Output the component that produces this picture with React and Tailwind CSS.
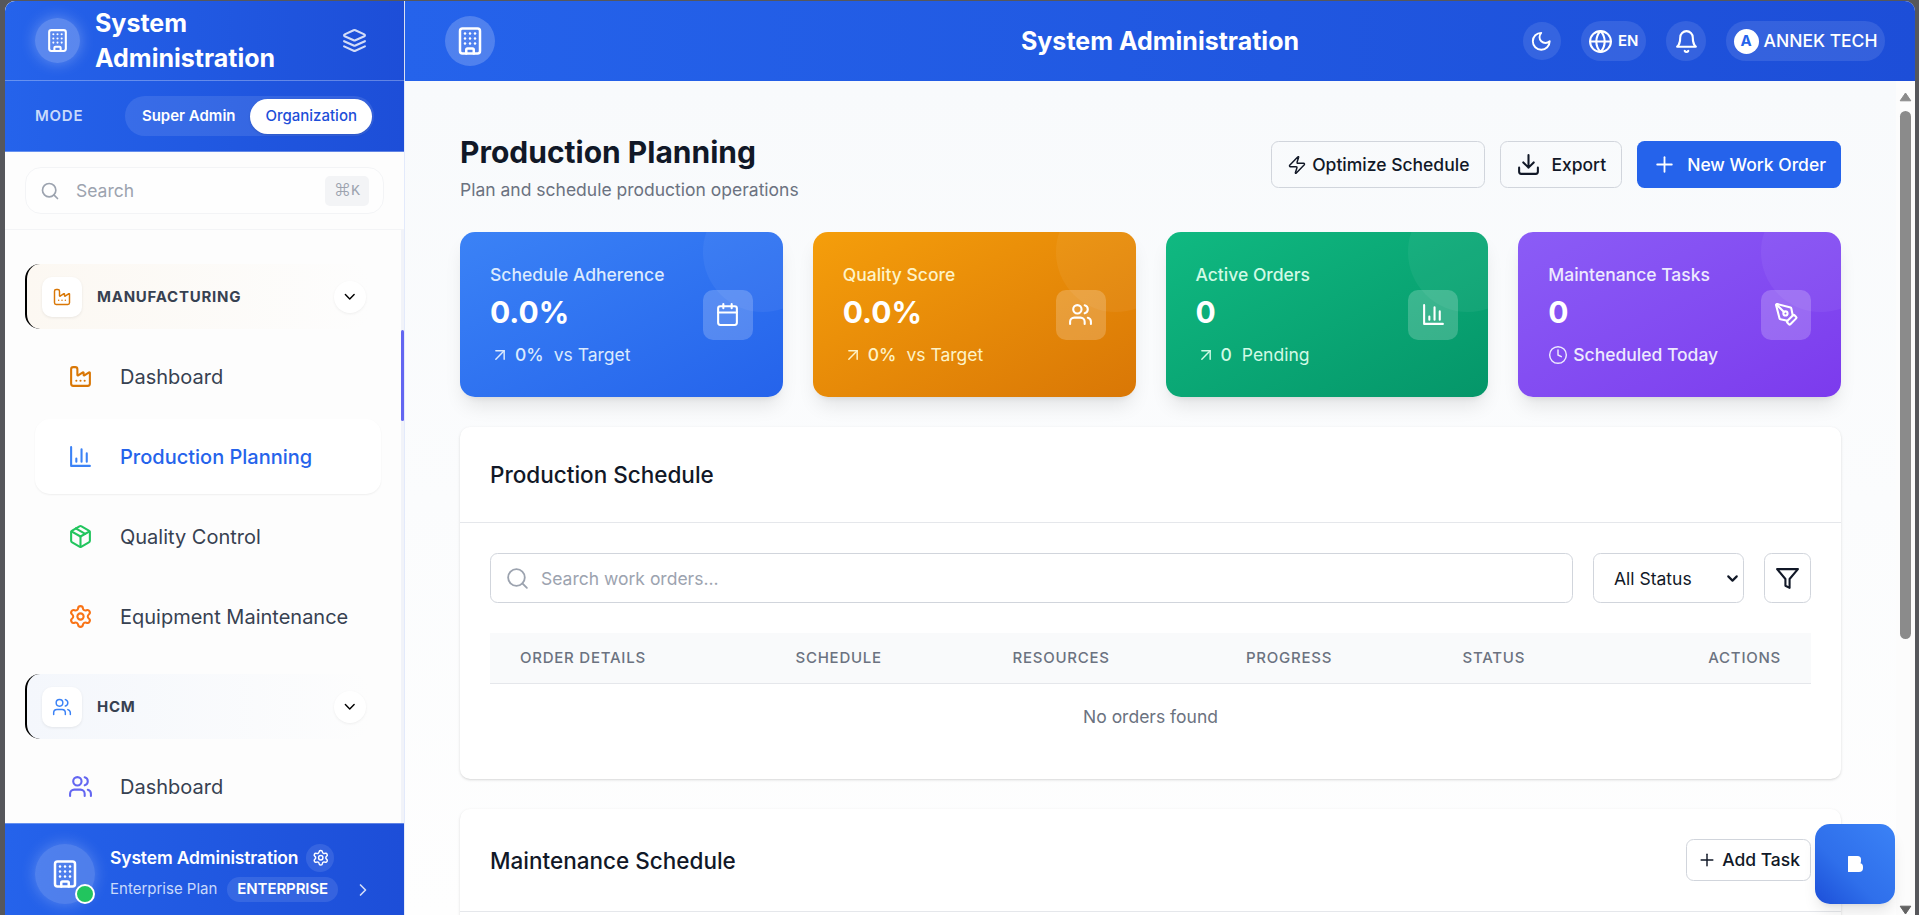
import {
  ArrowUpRight,
  Building,
  Calendar,
  ChevronDown,
  ChevronRight,
  Clock,
  Factory,
  Globe,
  Package,
  PenTool,
  Plus,
  Search,
  Settings,
  Users,
  Zap,
} from "lucide-react";

const menuGroups = [
  {
    title: "Manufacturing",
    icon: Factory,
    iconColor: "text-[#d97706]",
    background: "from-[#fcf8f2] to-[#fdfdfd]",
    items: [
      { label: "Dashboard", icon: Factory, color: "text-[#d97706]" },
      { label: "Production Planning", icon: BarChart, color: "text-[#3b82f6]", active: true },
      { label: "Quality Control", icon: Package, color: "text-[#22c55e]" },
      { label: "Equipment Maintenance", icon: Settings, color: "text-[#f97316]" },
    ],
  },
  {
    title: "HCM",
    icon: Users,
    iconColor: "text-[#3b82f6]",
    background: "from-[#f4f7fc] to-[#fdfdfd]",
    items: [{ label: "Dashboard", icon: Users, color: "text-[#6366f1]" }],
  },
];

const stats = [
  {
    label: "Schedule Adherence",
    value: "0.0%",
    trend: "0%",
    note: "vs Target",
    icon: Calendar,
    background: "from-[#3b82f6] to-[#2563eb]",
    tone: "text-[#dbeafe]",
  },
  {
    label: "Quality Score",
    value: "0.0%",
    trend: "0%",
    note: "vs Target",
    icon: Users,
    background: "from-[#f59e0b] to-[#d97706]",
    tone: "text-[#fef3c7]",
  },
  {
    label: "Active Orders",
    value: "0",
    trend: "0",
    note: "Pending",
    icon: BarChart,
    background: "from-[#10b981] to-[#059669]",
    tone: "text-[#d1fae5]",
  },
  {
    label: "Maintenance Tasks",
    value: "0",
    note: "Scheduled Today",
    icon: PenTool,
    background: "from-[#8b5cf6] to-[#7c3aed]",
    tone: "text-[#ede9fe]",
  },
];

export default function App() {
  return (
    <div className="h-[915px] w-[1919px] overflow-hidden bg-[#56575b] pt-px pr-1 pl-[5px] font-[Inter,sans-serif] text-[#111827]">
      <div className="flex h-full overflow-hidden rounded-t-[10px] bg-white">
        <Sidebar />
        <div className="flex min-w-0 flex-1 flex-col">
          <TopBar />
          <div className="flex min-h-0 flex-1">
            <main className="min-w-0 flex-1 overflow-hidden bg-linear-to-b from-[#f8fafc] to-[#fefefe] pt-[46px] pr-[55px] pl-[55px]">
              <PageHeader />
              <div className="mt-[30px] grid grid-cols-4 gap-[30px]">
                {stats.map((stat) => (
                  <StatCard key={stat.label} {...stat} />
                ))}
              </div>
              <ProductionSchedule />
              <MaintenanceSchedule />
            </main>
            <PageScrollbar />
          </div>
        </div>
      </div>
      <AssistantButton />
    </div>
  );
}

function Sidebar() {
  return (
    <aside className="flex w-[400px] shrink-0 flex-col border-r border-[#e3eafb] bg-[#fdfdfd]">
      <div className="flex h-20 shrink-0 items-center border-b border-white/30 bg-linear-to-r from-[#2563eb] to-[#1d4ed8] px-[30px] text-white">
        <span className="flex size-[45px] items-center justify-center rounded-full bg-white/25 shadow-[0_0_15px_rgba(255,255,255,0.3)]">
          <Building size={25} />
        </span>
        <h2 className="ml-[15px] w-[200px] text-[25px] leading-[35px] font-bold">
          System Administration
        </h2>
        <LayersIcon className="mr-[7px] ml-auto size-[25px] text-white/80" />
      </div>

      <div className="flex h-[71px] shrink-0 items-center justify-between border-b border-white/30 bg-linear-to-r from-[#2563eb] to-[#1d4ed8] pr-[30px] pl-[30px] text-[15px]">
        <span className="font-semibold tracking-[0.75px] text-[#c9dafb]">MODE</span>
        <div className="flex h-10 items-center rounded-full bg-white/10 p-[2px]">
          <button className="h-[35px] px-[15px] font-semibold text-white">Super Admin</button>
          <button className="h-[35px] rounded-full bg-white px-[15px] font-medium text-[#1d4ed8] shadow-sm">
            Organization
          </button>
        </div>
      </div>

      <div className="h-[78px] shrink-0 border-b border-gray-100 pt-[15px] pr-5 pl-5">
        <div className="flex h-[47px] items-center rounded-[16px] border border-gray-100 bg-white/60 pr-[14px] pl-[14px] text-[17.5px] text-[#9ca3af]">
          <Search size={20} />
          <span className="mt-px ml-4 flex-1">Search</span>
          <kbd className="flex h-[30px] w-11 items-center justify-center rounded-[5px] bg-[#f3f4f6] font-[Inter,sans-serif] leading-none">
            <span className="text-[17px] font-light">⌘</span>
            <span className="mt-px font-['Liberation_Mono',monospace] text-[15px]">K</span>
          </kbd>
        </div>
      </div>

      <div className="flex min-h-0 flex-1">
        <nav className="min-w-0 flex-1 overflow-hidden pt-[34px] pl-5">
          {menuGroups.map((group) => (
            <MenuGroup key={group.title} {...group} />
          ))}
        </nav>
        <div className="w-[3px] bg-[#f1f3f9] pt-[100px]">
          <div className="h-[91px] rounded-full bg-[#6366f1]" />
        </div>
      </div>

      <SidebarFooter />
    </aside>
  );
}

function MenuGroup({ title, icon: Icon, iconColor, background, items }) {
  return (
    <section className="mb-5">
      <div
        className={`flex h-[65px] w-[344px] items-center rounded-[15px] border-l-2 border-black bg-linear-to-r pr-[3px] pl-[15px] ${background}`}
      >
        <span className="flex size-10 items-center justify-center rounded-[10px] bg-white shadow-[0_1px_3px_rgba(0,0,0,0.08)]">
          <Icon size={20} strokeWidth={1.75} className={iconColor} />
        </span>
        <h3 className="mt-px ml-[15px] flex-1 text-[15px] font-bold tracking-[0.75px] text-[#374151] uppercase">
          {title}
        </h3>
        <span className="flex size-8 items-center justify-center rounded-full bg-white shadow-[0_1px_3px_rgba(0,0,0,0.06)]">
          <ChevronDown size={17.5} className="text-black" />
        </span>
      </div>
      <ul className="mt-[10px] space-y-[5px] pl-[10px]">
        {items.map((item) => (
          <MenuItem key={item.label} {...item} />
        ))}
      </ul>
    </section>
  );
}

function MenuItem({ label, icon: Icon, color, active }) {
  return (
    <li
      className={`flex h-[75px] w-[346px] items-center rounded-[15px] pl-[33px] text-[20px] ${
        active
          ? "bg-white font-medium text-[#2563eb] shadow-[0_1px_2px_rgba(0,0,0,0.06)]"
          : "text-[#374151]"
      }`}
    >
      <Icon size={25} className={color} />
      <span className="ml-[27px]">{label}</span>
    </li>
  );
}

function SidebarFooter() {
  return (
    <div className="flex h-[92px] shrink-0 border-t border-white/30 bg-linear-to-r from-[#2563eb] to-[#1d4ed8] pt-5 pl-[30px] text-white">
      <div className="relative flex size-[60px] items-center justify-center rounded-full bg-white/20 shadow-[0_0_15px_rgba(255,255,255,0.25)]">
        <Building size={30} />
        <span className="absolute right-0 bottom-0 size-5 rounded-full border-[2px] border-white bg-[#22c55e]" />
      </div>
      <div className="ml-[15px]">
        <div className="flex h-[27px] items-center">
          <span className="mt-px text-[17.5px] font-semibold tracking-[-0.15px]">
            System Administration
          </span>
          <span className="ml-2 flex size-7 items-center justify-center rounded-full bg-white/10">
            <Settings size={17.5} />
          </span>
        </div>
        <div className="mt-[6px] flex h-[25px] items-center text-[15px]">
          <span className="text-[#c9dafb]">Enterprise Plan</span>
          <span className="ml-[10px] flex h-[25px] items-center rounded-full bg-white/10 px-[10px] font-semibold tracking-[-0.1px]">
            ENTERPRISE
          </span>
          <ChevronRight size={20} className="ml-[15px] text-white/80" />
        </div>
      </div>
    </div>
  );
}

function TopBar() {
  return (
    <header className="grid h-20 shrink-0 grid-cols-[1fr_auto_1fr] items-center bg-linear-to-r from-[#2563eb] to-[#1d4ed8] pr-[30px] pl-10 text-white shadow-sm">
      <span className="flex size-[50px] items-center justify-center rounded-full bg-white/20">
        <Building size={30} />
      </span>
      <h1 className="pt-px pr-[10px] text-[25px] font-bold">System Administration</h1>
      <div className="flex items-center justify-end gap-5">
        <button className="flex size-[38px] items-center justify-center rounded-full bg-white/10">
          <MoonIcon className="size-[22.5px]" />
        </button>
        <button className="flex h-10 items-center rounded-full bg-white/10 pr-[7.5px] pl-[7.5px] text-[15px] font-semibold">
          <Globe size={25} />
          <span className="ml-[5px]">EN</span>
        </button>
        <button className="flex size-10 items-center justify-center rounded-full bg-white/10">
          <BellIcon className="size-[25px]" />
        </button>
        <button className="flex h-10 items-center rounded-full bg-white/10 px-[7.5px] text-[17.5px] font-medium">
          <span className="mr-[5px] flex size-[25px] items-center justify-center rounded-full bg-white text-[15px] font-bold text-[#2563eb]">
            A
          </span>
          <span className="mt-px">ANNEK TECH</span>
        </button>
      </div>
    </header>
  );
}

function PageHeader() {
  return (
    <div className="flex h-[75px] items-center justify-between">
      <div>
        <h1 className="text-[30px] leading-[50px] font-bold">Production Planning</h1>
        <p className="text-[17.5px] leading-[25px] text-[#6b7280]">
          Plan and schedule production operations
        </p>
      </div>
      <div className="flex gap-[15px] text-[17.5px] font-medium">
        <button className="flex h-[47px] items-center gap-[5px] rounded-[7.5px] border border-gray-300 px-[15px]">
          <Zap size={20} strokeWidth={1.75} />
          <span className="mt-px">Optimize Schedule</span>
        </button>
        <button className="flex h-[47px] items-center gap-[10px] rounded-[7.5px] border border-gray-300 px-[15px]">
          <DownloadIcon className="size-[25px]" />
          <span className="mt-px">Export</span>
        </button>
        <button className="flex h-[47px] items-center gap-[10px] rounded-[7.5px] bg-[#2563eb] px-[15px] text-white">
          <Plus size={25} strokeWidth={1.75} />
          <span className="mt-px">New Work Order</span>
        </button>
      </div>
    </div>
  );
}

function StatCard({ label, value, trend, note, icon: Icon, background, tone }) {
  return (
    <article
      className={`relative flex h-[165px] items-center justify-between rounded-[15px] bg-linear-to-br p-[30px] text-white shadow-[0_12px_19px_-4px_rgba(0,0,0,0.1),0_5px_7px_-5px_rgba(0,0,0,0.1)] ${background}`}
    >
      <div className="absolute inset-0 overflow-hidden rounded-[15px]">
        <div className="absolute -top-10 -right-10 size-[120px] rounded-full bg-white/5" />
      </div>
      <div className="relative">
        <p className={`text-[17.5px] leading-[25px] font-medium ${tone}`}>{label}</p>
        <p className="mt-[5px] text-[30px] leading-[40px] font-bold">{value}</p>
        <div className={`mt-[10px] flex h-[25px] items-center text-[17.5px] font-medium ${tone}`}>
          {trend ? (
            <>
              <ArrowUpRight size={20} strokeWidth={1.75} />
              <span className="mt-px ml-[5px]">{trend}</span>
              <span className="mt-px ml-[10px] font-normal">{note}</span>
            </>
          ) : (
            <>
              <Clock size={20} strokeWidth={1.75} />
              <span className="mt-px ml-[5px]">{note}</span>
            </>
          )}
        </div>
      </div>
      <span className="relative flex size-[50px] items-center justify-center rounded-[10px] bg-white/20">
        <Icon size={25} />
      </span>
    </article>
  );
}

function ProductionSchedule() {
  return (
    <section className="mt-[30px] h-[352px] rounded-[10px] bg-white shadow-[0_1px_3px_rgba(0,0,0,0.13),0_1px_2px_-1px_rgba(0,0,0,0.1)]">
      <div className="flex h-24 items-center border-b border-gray-200 px-[30px]">
        <h2 className="text-[22.5px] font-medium">Production Schedule</h2>
      </div>
      <div className="px-[30px] pt-[30px]">
        <div className="flex h-[50px] gap-5 text-[17.5px]">
          <div className="flex flex-1 items-center rounded-[7.5px] border border-gray-300 pl-[14px] text-[#9ca3af]">
            <Search size={25} strokeWidth={1.75} />
            <span className="mt-0.5 ml-[11px]">Search work orders...</span>
          </div>
          <div className="flex w-[151px] items-center justify-between rounded-[7.5px] border border-gray-300 pr-[2px] pl-5">
            <span className="mt-0.5">All Status</span>
            <ChevronDown size={17} strokeWidth={3} />
          </div>
          <button className="flex w-[47px] items-center justify-center rounded-[7.5px] border border-gray-300">
            <FilterIcon className="size-[25px]" />
          </button>
        </div>
        <table className="mt-[30px] w-full table-fixed text-left">
          <thead className="h-[50px] border-b border-gray-200 bg-[#f9fafb] text-[15px] tracking-[0.75px] text-[#6b7280] uppercase">
            <tr>
              <th className="w-[275.5px] pl-[30px] font-medium">Order Details</th>
              <th className="w-[217px] pl-[30px] font-medium">Schedule</th>
              <th className="w-[233.5px] pl-[30px] font-medium">Resources</th>
              <th className="w-[216.5px] pl-[30px] font-medium">Progress</th>
              <th className="pl-[30px] font-medium">Status</th>
              <th className="w-[200px] pr-[30px] text-right font-medium">Actions</th>
            </tr>
          </thead>
          <tbody>
            <tr>
              <td colSpan={6} className="h-[68px] text-center text-[17.5px] text-[#6b7280]">
                No orders found
              </td>
            </tr>
          </tbody>
        </table>
      </div>
    </section>
  );
}

function MaintenanceSchedule() {
  return (
    <section className="mt-[30px] h-[300px] rounded-[10px] bg-white shadow-[0_1px_3px_rgba(0,0,0,0.13),0_1px_2px_-1px_rgba(0,0,0,0.1)]">
      <div className="flex h-[103px] items-center justify-between border-b border-gray-200 px-[30px]">
        <h2 className="mt-px text-[22.5px] font-medium">Maintenance Schedule</h2>
        <button className="flex h-[42px] items-center gap-[5px] rounded-[7.5px] border border-gray-300 px-[10px] text-[17.5px] font-medium">
          <Plus size={20} strokeWidth={1.75} />
          <span className="mt-px">Add Task</span>
        </button>
      </div>
    </section>
  );
}

function PageScrollbar() {
  return (
    <div className="flex w-[19px] shrink-0 flex-col items-center bg-[#fcfcfc] pt-[11px]">
      <svg viewBox="0 0 13 10" className="h-[10px] w-[13px]">
        <path d="M6.5 1 11.8 8.8H1.2Z" fill="#8b8b8b" stroke="#8b8b8b" strokeLinejoin="round" />
      </svg>
      <div className="mt-[9px] h-[528px] w-[11px] rounded-full bg-[#8b8b8b]" />
      <svg viewBox="0 0 13 10" className="mt-auto h-[10px] w-[13px]">
        <path d="M6.5 9 11.8 1.2H1.2Z" fill="#636363" stroke="#636363" strokeLinejoin="round" />
      </svg>
    </div>
  );
}

function AssistantButton() {
  return (
    <button className="fixed right-6 bottom-[11px] flex size-20 items-center justify-center rounded-[15px] bg-linear-to-tr from-[#1d4ed8] via-[#2f6feb] via-40% to-[#3b82f6] shadow-lg">
      <svg viewBox="0 0 16 16" className="size-4" fill="white">
        <rect x="1" y="0" width="13" height="8.5" rx="3.5" />
        <rect x="1" y="7" width="15" height="9" rx="4" />
        <rect x="1" y="0" width="9" height="16" rx="0.5" />
      </svg>
    </button>
  );
}

function LineIcon({ children, size, strokeWidth = 2, className }) {
  return (
    <svg
      viewBox="0 0 24 24"
      width={size}
      height={size}
      fill="none"
      stroke="currentColor"
      strokeWidth={strokeWidth}
      strokeLinecap="round"
      strokeLinejoin="round"
      className={className}
    >
      {children}
    </svg>
  );
}

function BarChart({ size, strokeWidth, className }) {
  return (
    <LineIcon size={size} strokeWidth={strokeWidth} className={className}>
      <path d="M3 3v18h18M18 17V9M13 17V5M8 17v-3" />
    </LineIcon>
  );
}

function LayersIcon({ className }) {
  return (
    <LineIcon className={className}>
      <path d="m12.83 2.18a2 2 0 0 0-1.66 0L2.6 6.08a1 1 0 0 0 0 1.83l8.58 3.91a2 2 0 0 0 1.66 0l8.58-3.9a1 1 0 0 0 0-1.83Z" />
      <path d="m22 17.65-9.17 4.16a2 2 0 0 1-1.66 0L2 17.65" />
      <path d="m22 12.65-9.17 4.16a2 2 0 0 1-1.66 0L2 12.65" />
    </LineIcon>
  );
}

function MoonIcon({ className }) {
  return (
    <LineIcon className={className}>
      <path d="M12 3a6 6 0 0 0 9 9 9 9 0 1 1-9-9Z" />
    </LineIcon>
  );
}

function BellIcon({ className }) {
  return (
    <LineIcon className={className}>
      <path d="M6 8a6 6 0 0 1 12 0c0 7 3 9 3 9H3s3-2 3-9" />
      <path d="M10.3 21a1.94 1.94 0 0 0 3.4 0" />
    </LineIcon>
  );
}

function DownloadIcon({ className }) {
  return (
    <LineIcon className={className}>
      <path d="M21 15v4a2 2 0 0 1-2 2H5a2 2 0 0 1-2-2v-4M7 10l5 5 5-5M12 15V3" />
    </LineIcon>
  );
}

function FilterIcon({ className }) {
  return (
    <LineIcon className={className}>
      <path d="M22 3H2l8 9.46V19l4 2v-8.54Z" />
    </LineIcon>
  );
}
